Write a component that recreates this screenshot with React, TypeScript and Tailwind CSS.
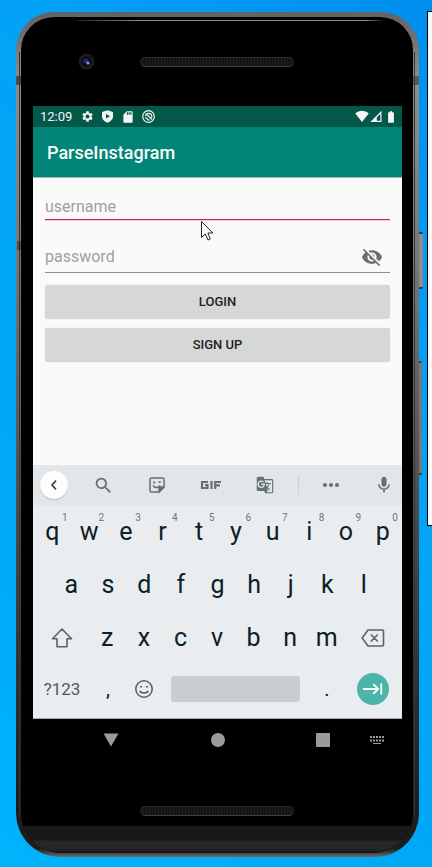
import type { ReactNode } from "react";
import {
  MdBatteryFull,
  MdGTranslate,
  MdKeyboardTab,
  MdMic,
  MdSdCard,
  MdSearch,
  MdSettings,
  MdVisibilityOff,
} from "react-icons/md";

function StatusBar() {
  return (
    <div className="flex h-[21px] items-center bg-[#03584a] pl-[7px] pr-1 text-[#f5f5f5]">
      <span className="w-[41px] text-[13px] leading-5">12:09</span>
      <div className="flex flex-1 items-center gap-[7px]">
        <MdSettings size={13} />
        <svg width="13" height="13" viewBox="0 0 13 13">
          <path fill="currentColor" fillRule="evenodd" d="M6.500.2 12 2V6.500C12 9.500 9.500 11.700 6.500 12.800 3.500 11.700 1 9.500 1 6.500V2ZM5 4.100v4.400l4-2.200Z" />
        </svg>
        <MdSdCard size={14} />
        <svg width="13" height="13" viewBox="0 0 13 13" fill="none" stroke="currentColor" strokeWidth="1.200">
          <circle cx="6.500" cy="6.500" r="5.800" />
          <path d="M10 9.500 5 4.700M3.400 5.800a3.300 3.300 0 0 1 6.400.2c0 .6-.1 1.100-.4 1.600M3.300 7.200l3 2.800h1.500" />
        </svg>
      </div>
      <svg width="14" height="13" viewBox="0 0 14 13">
        <path fill="currentColor" d="M.3 3.400C4-.1 10-.1 13.700 3.400L7 12Z" />
      </svg>
      <svg className="ml-px" width="12" height="13" viewBox="0 0 12 13">
        <path fill="currentColor" fillRule="evenodd" d="M11.500.8V12H.3ZM10.300 4v6.800H6.800V7.300Z" />
      </svg>
      <MdBatteryFull size={14} className="ml-[2px]" />
    </div>
  );
}

function LoginForm() {
  return (
    <form className="flex flex-1 flex-col bg-[#fafafa] px-3 pt-4" onSubmit={(e) => e.preventDefault()}>
      <input
        aria-label="username"
        placeholder="username"
        className="h-[26px] border-b border-[#d81b60] bg-transparent text-[16px] leading-6 shadow-[0_1px_0_#f3c3d2] outline-none placeholder:text-[#a0a0a0]"
      />
      <div className="mt-5 flex h-[33px] items-center border-b border-[#8e8e8e] pt-[2px]">
        <input
          type="password"
          aria-label="password"
          placeholder="password"
          className="min-w-0 flex-1 bg-transparent text-[16px] leading-6 outline-none placeholder:text-[#a0a0a0]"
        />
        <button type="button" aria-label="Show password" className="mr-[7px] text-[#6e6e6e]">
          <MdVisibilityOff size={22} />
        </button>
      </div>
      <button className="mt-3 h-[34px] rounded-[3px] bg-[#d6d7d7] text-[13px] font-medium text-[#222] shadow-[0_0_1px_#b8c4c4]">
        LOGIN
      </button>
      <button type="button" className="mt-[9px] h-[34px] rounded-[3px] bg-[#d6d7d7] text-[13px] font-medium text-[#222] shadow-[0_0_1px_#b8c4c4]">
        SIGN UP
      </button>
    </form>
  );
}

function ToolKey({ label, children }: { label: string; children: ReactNode }) {
  return (
    <button aria-label={label} className="flex items-center justify-center">
      {children}
    </button>
  );
}

function KeyboardTools() {
  return (
    <div className="grid h-10 grid-cols-[43px_repeat(4,1fr)_12px_1fr_44px] items-center bg-[#e2e6e9] text-[#637177]">
      <button aria-label="Back" className="ml-[7px] flex size-7 items-center justify-center rounded-full bg-[#fdfdfd] text-[#444] shadow-[0_1px_1px_#bbb]">
        <svg width="8" height="12" viewBox="0 0 8 12" fill="none" stroke="currentColor" strokeWidth="1.700">
          <path d="M6 1.700 2 6l4 4.300" />
        </svg>
      </button>
      <ToolKey label="Search"><MdSearch size={21} /></ToolKey>
      <ToolKey label="Stickers">
        <svg width="16" height="16" viewBox="0 0 16 16" fill="none" stroke="currentColor" strokeWidth="1.500">
          <path d="M2.500 1h11A1.500 1.500 0 0 1 15 2.500V10l-5 5H2.500A1.500 1.500 0 0 1 1 13.500v-11A1.500 1.500 0 0 1 2.500 1Z" />
          <path d="M10 15v-3.500A1.500 1.500 0 0 1 11.500 10H15Z" fill="currentColor" />
          <path d="M4 8.200c1.200 3 5.500 3.200 7.200.2M4 5.500h2.500M9.500 5.300l2.300-.7" />
        </svg>
      </ToolKey>
      <ToolKey label="GIF">
        <svg width="22" height="10" viewBox="0 0 22 10" fill="none" stroke="currentColor" strokeWidth="2.200">
          <path d="M8 2H2v6h5.500V5H5M11.500 1v8M15.200 9V2H21M15.200 5.400H20" />
        </svg>
      </ToolKey>
      <ToolKey label="Translate"><MdGTranslate size={18} /></ToolKey>
      <span className="mx-auto h-5 w-px bg-[#cdd0d0]" />
      <ToolKey label="More">
        <svg width="16" height="4" viewBox="0 0 16 4" fill="currentColor">
          <circle cx="2" cy="2" r="2" /><circle cx="8" cy="2" r="2" /><circle cx="14" cy="2" r="2" />
        </svg>
      </ToolKey>
      <button aria-label="Voice input" className="flex justify-end pr-2"><MdMic size={20} /></button>
    </div>
  );
}

function LetterKey({ char, hint }: { char: string; hint?: string }) {
  return (
    <button className="relative flex h-full min-w-0 flex-1 items-center justify-center text-[25px] leading-8">
      {char}
      {hint && <span className="absolute right-0 top-[7px] w-3 text-center text-[10px] leading-3 text-[#6b777c]">{hint}</span>}
    </button>
  );
}

function Keyboard() {
  return (
    <div className="border-b border-[#a9acae] bg-[#e9edf0] text-[#0b2027]">
      <KeyboardTools />
      <div className="flex h-[53px] px-px">
        {"qwertyuiop".split("").map((c, i) => (
          <LetterKey key={c} char={c} hint={String((i + 1) % 10)} />
        ))}
      </div>
      <div className="flex h-[53px] px-5">
        {"asdfghjkl".split("").map((c) => <LetterKey key={c} char={c} />)}
      </div>
      <div className="flex h-[53px] px-px">
        <button aria-label="Shift" className="flex w-[55px] items-center justify-center text-[#56656c]">
          <svg width="22" height="20" viewBox="0 0 22 20" fill="none" stroke="currentColor" strokeWidth="1.600" strokeLinejoin="round">
            <path d="M11 1 20.500 10.700H16V18.800H6V10.700H1.500Z" />
          </svg>
        </button>
        {"zxcvbnm".split("").map((c) => <LetterKey key={c} char={c} />)}
        <button aria-label="Backspace" className="flex w-14 items-center justify-center text-[#56656c]">
          <svg width="24" height="18" viewBox="0 0 24 18" fill="none" stroke="currentColor" strokeWidth="1.600" strokeLinejoin="round">
            <path d="M7 1H21.500A1 1 0 0 1 22.500 2V16A1 1 0 0 1 21.500 17H7L1.200 9ZM9.800 5.500l7 7M16.800 5.500l-7 7" />
          </svg>
        </button>
      </div>
      <div className="flex h-[54px] items-center px-px pb-1">
        <button className="w-14 text-[17px] leading-6 text-[#4d5c63]">?123</button>
        <button className="w-9 text-[20px] leading-6">,</button>
        <button aria-label="Emoji" className="flex w-9 justify-center text-[#56656c]">
          <svg width="20" height="20" viewBox="0 0 20 20" fill="none" stroke="currentColor" strokeWidth="1.600">
            <circle cx="10" cy="10" r="8.200" />
            <path d="M5.800 11.800c1.500 3 6.900 3 8.400 0" />
            <circle cx="7" cy="7.800" r="1" fill="currentColor" stroke="none" />
            <circle cx="13" cy="7.800" r="1" fill="currentColor" stroke="none" />
          </svg>
        </button>
        <button aria-label="Space" className="mx-[9px] h-[26px] flex-1 rounded-[3px] bg-[#c9cdd0]" />
        <button className="w-9 text-[20px] leading-6">.</button>
        <div className="flex w-14 justify-center">
          <button aria-label="Next" className="flex size-8 items-center justify-center rounded-full bg-[#4bb5a9] text-white">
            <MdKeyboardTab size={22} />
          </button>
        </div>
      </div>
    </div>
  );
}

function NavBar() {
  return (
    <nav className="flex h-[43px] items-center pb-[2px] pl-[19%] pr-[18px] text-[#9b9b9b]">
      <div className="flex flex-1 items-center justify-between">
        <button aria-label="Hide keyboard">
          <svg width="16" height="14" viewBox="0 0 16 14"><path fill="currentColor" d="M.5.5h15L8 13.500Z" /></svg>
        </button>
        <button aria-label="Home" className="size-[14px] rounded-full bg-[#9b9b9b]" />
        <button aria-label="Recents" className="size-[14px] rounded-[1px] bg-[#9b9b9b]" />
      </div>
      <button aria-label="Switch keyboard" className="ml-10">
        <svg width="14" height="8" viewBox="0 0 14 8" stroke="currentColor">
          <path strokeWidth="2" strokeDasharray="2 1" d="M0 1h14M0 4.500h14" />
          <path strokeWidth="1" d="M3 7.500h8" />
        </svg>
      </button>
    </nav>
  );
}

function Speaker() {
  return (
    <div className="h-[10px] rounded-full border border-[#2a2a29] border-b-[#444442] bg-[repeating-linear-gradient(90deg,#141414_0px,#141414_2px,#1f1f1e_2px,#1f1f1e_3px)]" />
  );
}

export default function App() {
  return (
    <main className="relative flex min-h-screen flex-col overflow-hidden bg-[linear-gradient(225deg,#008eee_0%,#03a2f6_33%,#00a8f6_67%,#00b4fc_100%)] pb-[10px] pl-4 pr-[13px] pt-3 font-['Roboto',sans-serif]">
      <div className="absolute -right-2 top-[11px] h-[515px] w-[13px] border border-black bg-[#fafafa]" />
      <div className="absolute right-[9px] top-[232px] h-[57px] w-1 rounded-r-xs border-y-2 border-[#383838] bg-[#8c8c8c]" />
      <div className="absolute right-[10px] top-[361px] h-[114px] w-[3px] rounded-r-xs border-y-2 border-[#383838] bg-[#777]" />

      <div className="relative flex flex-1 flex-col rounded-t-[38px] rounded-b-[44px] bg-[linear-gradient(180deg,#626262_0%,#8d8d8d_8%,#777_30%,#4a4a4a_60%,#303030_80%,#1c1c1c_95%,#1c1c1c_99%,#6b6b6b_100%)] pb-1 pl-[5px] pr-[6px] pt-[5px]">
        <div className="absolute left-0 top-16 h-[9px] w-[5px] bg-[#4e4e4e]" />
        <div className="absolute right-0 top-16 h-[9px] w-[6px] bg-[#5a5a5a]" />
        <div className="absolute left-px top-[229px] h-[9px] w-[4px] bg-[#4e4e4e]" />
        <div className="absolute inset-y-10 left-[3px] w-px bg-[#333]" />
        <div className="absolute inset-y-10 right-[4px] w-px bg-[#333]" />
        <div className="flex flex-1 flex-col overflow-hidden rounded-t-[33px] rounded-b-[40px] bg-black">
          <header className="relative grid h-[89px] grid-cols-[1fr_154px_1fr] items-center">
            <div className="absolute left-14 right-8 top-[3px] h-px bg-[linear-gradient(90deg,#222,#8a8c90_20%,#8a8c90_95%,#222)]" />
            <div className="pl-[57px]">
              <svg width="17" height="17" viewBox="0 0 17 17">
                <circle cx="8.500" cy="8.500" r="8" fill="#1b1b1d" />
                <circle cx="8.500" cy="8.500" r="5" fill="#0b0c18" />
                <circle cx="8" cy="8" r="2.500" fill="#222b63" />
                <circle cx="10" cy="10" r="1.500" fill="#8b9bed" />
              </svg>
            </div>
            <Speaker />
          </header>

          <div className="flex flex-1 flex-col pl-3 pr-[11px]">
            <StatusBar />
            <div className="flex h-[51px] items-center border-b border-[#a6bbb7] bg-[#008577] px-[14px] pt-[2px]">
              <h1 className="text-[18px] font-medium leading-6 text-[#fafafa]">ParseInstagram</h1>
            </div>
            <LoginForm />
            <Keyboard />
            <NavBar />
          </div>

          <div className="mx-auto mt-11 w-[154px]"><Speaker /></div>
          <div className="mt-[10px] h-[27px] bg-[linear-gradient(180deg,#181818_0%,#191919_50%,#292929_60%,#242424_90%,#101010_100%)]" />
        </div>
      </div>

      <svg className="pointer-events-none absolute left-[201px] top-[221px]" width="13" height="20" viewBox="0 0 13 20">
        <path d="M.5.5V16.500L4.300 13 7 19 9.300 18 6.800 12H11.800Z" fill="#fff" stroke="#222" />
      </svg>
    </main>
  );
}
